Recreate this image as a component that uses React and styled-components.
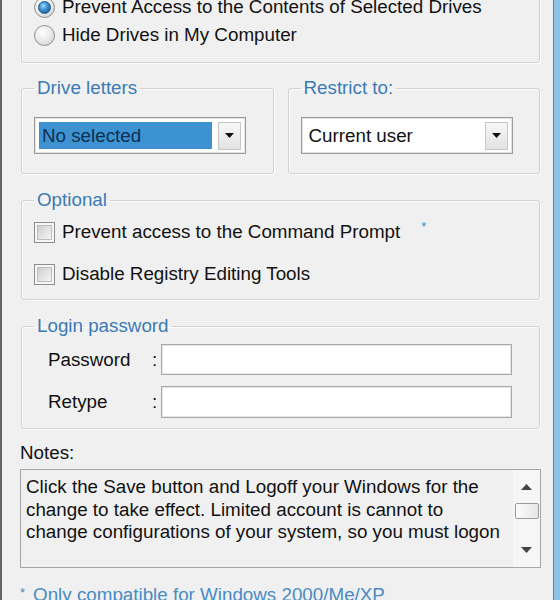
import styled, { createGlobalStyle } from 'styled-components';

const GlobalStyle = createGlobalStyle`
    html, body {
        margin: 0;
        padding: 0;
        background: #f0f0f0;
    }
    body {
        font-family: "Liberation Sans", Arial, sans-serif;
        font-size: 18.8px;
        color: #121212;
    }
`;

const Frame = styled.div`
    width: 560px;
    height: 600px;
    box-sizing: border-box;
    overflow: hidden;
    border-right: 6px solid #8dc3e8;
    background: #f0f0f0;
`;

const Window = styled.div`
    height: 100%;
    box-sizing: border-box;
    border-left: 2px solid #646464;
    border-right: 1px solid #7c7c7c;
    padding: 0 13px 0 19px;
    display: flex;
    flex-direction: column;
`;

const Group = styled.fieldset`
    margin: ${p => p.$top || 0}px 0 0;
    min-width: 0;
    padding: ${p => p.$pad || '0 12px'};
    border: 1px solid #d2d2d2;
    border-radius: 3px;
    box-shadow: inset 1px 1px 0 #fbfbfb, 1px 1px 0 #fbfbfb;
    display: flex;
    flex-direction: column;
    gap: ${p => p.$gap || 0}px;
    flex: ${p => (p.$grow ? 1 : 'none')};
`;

const Legend = styled.legend`
    padding: 0 3px;
    line-height: 22px;
    color: #3b7bb4;
`;

const Split = styled.div`
    display: flex;
    gap: 14px;
    margin-top: 14px;
`;

const Choice = styled.label`
    display: flex;
    align-items: center;
    gap: 7px;
    height: ${p => p.$h || 28}px;
    white-space: nowrap;
`;

const Radio = styled.span`
    width: 21px;
    height: 21px;
    box-sizing: border-box;
    border-radius: 50%;
    border: 1px solid #8e8e8e;
    background: radial-gradient(circle at 40% 35%, #ffffff 0%, #ececec 45%, #c9c9c9 100%);
    display: flex;
    align-items: center;
    justify-content: center;

    &::after {
        content: '';
        display: ${p => (p.$on ? 'block' : 'none')};
        width: 11px;
        height: 11px;
        border-radius: 50%;
        border: 1px solid #24557e;
        background: radial-gradient(circle at 40% 35%, #a6dcff 0%, #3b94d6 40%, #0d4f86 100%);
    }
`;

const Check = styled.span`
    width: 21px;
    height: 21px;
    box-sizing: border-box;
    border: 1px solid #8e8e8e;
    background: #f6f6f6;
    padding: 2px;

    &::after {
        content: '';
        display: block;
        height: 100%;
        box-sizing: border-box;
        border: 1px solid #bdbdbd;
        background: linear-gradient(135deg, #cfcfcf, #f5f5f5);
    }
`;

const Star = styled.span`
    color: #3b8dcc;
    font-size: 13px;
    align-self: flex-start;
    margin-left: ${p => p.$gap || 16}px;
    margin-top: ${p => p.$up || 0}px;
`;

const Combo = styled.div`
    width: 212px;
    height: 37px;
    box-sizing: border-box;
    margin-top: 18px;
    margin-bottom: 19px;
    border: 1px solid #9c9c9c;
    box-shadow: inset 0 0 0 1px #e2e2e2;
    background: #fff;
    display: flex;
    align-items: center;
    padding: 0 4px 0 4px;
    gap: 6px;
`;

const ComboText = styled.span`
    flex: 1;
    height: 27px;
    line-height: 27px;
    padding: 0 3px;
    background: ${p => (p.$selected ? '#3d92d2' : 'transparent')};
    color: ${p => (p.$selected ? '#0f2f50' : '#121212')};
`;

const DropButton = styled.span`
    width: 23px;
    height: 28px;
    box-sizing: border-box;
    border: 1px solid #c6c6c6;
    background: linear-gradient(#f7f7f7, #e3e3e3);
    display: flex;
    align-items: center;
    justify-content: center;
`;

const FieldRow = styled.div`
    display: grid;
    grid-template-columns: 118px 9px 351px;
    align-items: center;
    height: ${p => p.$h}px;
`;

const FieldLabel = styled.span`
    padding-left: 14px;
`;

const Input = styled.div`
    height: 100%;
    box-sizing: border-box;
    border: 1px solid #a9a9a9;
    box-shadow: inset 0 0 0 1px #e6e6e6;
    background: #fff;
`;

const NotesLabel = styled.div`
    line-height: 22px;
    margin: 13px 0 0 -1px;
`;

const NotesBox = styled.div`
    margin: 5px -1px 0;
    height: 99px;
    flex: none;
    box-sizing: border-box;
    border: 1px solid #a6a6a6;
    display: flex;
`;

const NotesText = styled.div`
    flex: 1;
    padding: 6px 4px 0 5px;
    line-height: 22.5px;
    overflow: hidden;
    white-space: nowrap;
`;

const ScrollBar = styled.div`
    width: 27px;
    display: flex;
    flex-direction: column;
    align-items: center;
    background: #f6f6f6;
    padding: 14px 0;
`;

const Arrow = styled.svg`
    width: 11px;
    height: 6px;
    flex: none;
`;

const Thumb = styled.div`
    width: 24px;
    height: 16px;
    box-sizing: border-box;
    border: 1px solid #9b9b9b;
    border-radius: 2px;
    background: linear-gradient(90deg, #fbfbfb, #e6e6e6);
    margin-top: 13px;
`;

const Track = styled.div`
    flex: 1;
`;

const Footer = styled.div`
    margin: 14px 0 0 -1px;
    line-height: 22px;
    color: #4a8bc3;
    white-space: nowrap;
`;

const FooterStar = styled.span`
    font-size: 13px;
    vertical-align: 4px;
    margin-right: 8px;
`;

const Triangle = ({ up, color = '#111' }) => (
    <svg width="9" height="5" viewBox="0 0 9 5">
        <polygon points={up ? '0,5 9,5 4.5,0' : '0,0 9,0 4.5,5'} fill={color} />
    </svg>
);

const App = () => {
    return (
        <>
            <GlobalStyle />
            <Frame>
                <Window>
                    <Group $top={-40} $pad="32px 12px 13px">
                        <Choice>
                            <Radio $on />
                            Prevent Access to the Contents of Selected Drives
                            <Star $gap={14} $up={-10}>*</Star>
                        </Choice>
                        <Choice>
                            <Radio />
                            Hide Drives in My Computer
                        </Choice>
                    </Group>

                    <Split>
                        <Group $grow>
                            <Legend>Drive letters</Legend>
                            <Combo>
                                <ComboText $selected>No selected</ComboText>
                                <DropButton><Triangle /></DropButton>
                            </Combo>
                        </Group>
                        <Group $grow>
                            <Legend>Restrict to:</Legend>
                            <Combo>
                                <ComboText>Current user</ComboText>
                                <DropButton><Triangle /></DropButton>
                            </Combo>
                        </Group>
                    </Split>

                    <Group $top={15} $pad="6px 12px 10px" $gap={12}>
                        <Legend>Optional</Legend>
                        <Choice $h={30}>
                            <Check />
                            Prevent access to the Command Prompt
                            <Star $gap={14} $up={2}>*</Star>
                        </Choice>
                        <Choice $h={30}>
                            <Check />
                            Disable Registry Editing Tools
                        </Choice>
                    </Group>

                    <Group $top={15} $pad="7px 12px 10px" $gap={11}>
                        <Legend>Login password</Legend>
                        <FieldRow $h={31}>
                            <FieldLabel>Password</FieldLabel>
                            <span>:</span>
                            <Input />
                        </FieldRow>
                        <FieldRow $h={32}>
                            <FieldLabel>Retype</FieldLabel>
                            <span>:</span>
                            <Input />
                        </FieldRow>
                    </Group>

                    <NotesLabel>Notes:</NotesLabel>
                    <NotesBox>
                        <NotesText>
                            Click the Save button and Logoff your Windows for the<br />
                            change to take effect. Limited account is cannot to<br />
                            change configurations of your system, so you must logon
                        </NotesText>
                        <ScrollBar>
                            <Arrow viewBox="0 0 11 6"><polygon points="0,6 11,6 5.5,0" fill="#444" /></Arrow>
                            <Thumb />
                            <Track />
                            <Arrow viewBox="0 0 11 6"><polygon points="0,0 11,0 5.5,6" fill="#444" /></Arrow>
                        </ScrollBar>
                    </NotesBox>

                    <Footer><FooterStar>*</FooterStar>Only compatible for Windows 2000/Me/XP</Footer>
                </Window>
            </Frame>
        </>
    );
};

export default App;
